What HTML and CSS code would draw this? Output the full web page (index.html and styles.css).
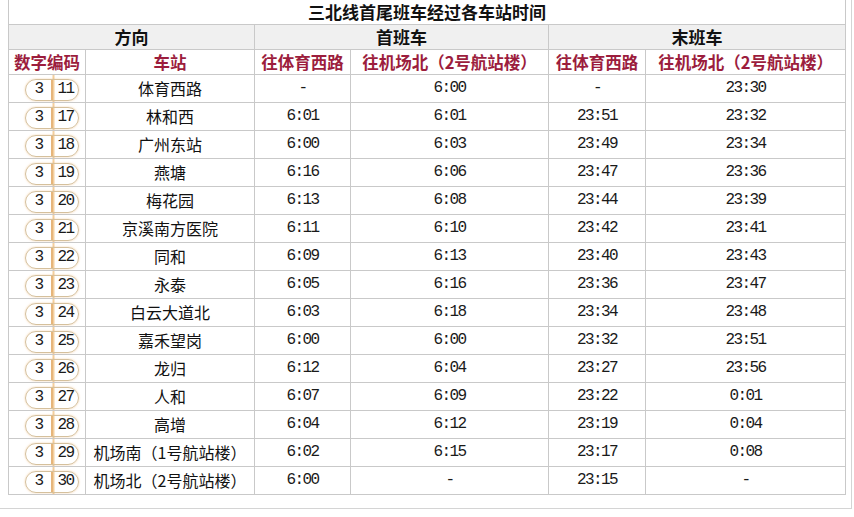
FILE: index.html
```html
<!DOCTYPE html>
<html lang="zh-CN">
<head>
<meta charset="utf-8">
<title>三北线首尾班车经过各车站时间</title>
<link rel="stylesheet" href="styles.css">
</head>
<body>
<div class="frame">
<table class="timetable">
  <colgroup>
    <col class="c-code"><col class="c-station"><col class="c-t1"><col class="c-t2"><col class="c-t3"><col class="c-t4">
  </colgroup>
  <thead>
    <tr class="title-row"><th colspan="6">三北线首尾班车经过各车站时间</th></tr>
    <tr class="group-row"><th colspan="2">方向</th><th colspan="2">首班车</th><th colspan="2">末班车</th></tr>
    <tr class="sub-row"><th>数字编码</th><th>车站</th><th>往体育西路</th><th>往机场北（2号航站楼）</th><th>往体育西路</th><th>往机场北（2号航站楼）</th></tr>
  </thead>
  <tbody>
    <tr><td class="code"><span class="pill"><span class="l">3</span><span class="n">11</span></span></td><td class="st">体育西路</td><td class="tm">-</td><td class="tm">6:00</td><td class="tm">-</td><td class="tm">23:30</td></tr>
    <tr><td class="code"><span class="pill"><span class="l">3</span><span class="n">17</span></span></td><td class="st">林和西</td><td class="tm">6:01</td><td class="tm">6:01</td><td class="tm">23:51</td><td class="tm">23:32</td></tr>
    <tr><td class="code"><span class="pill"><span class="l">3</span><span class="n">18</span></span></td><td class="st">广州东站</td><td class="tm">6:00</td><td class="tm">6:03</td><td class="tm">23:49</td><td class="tm">23:34</td></tr>
    <tr><td class="code"><span class="pill"><span class="l">3</span><span class="n">19</span></span></td><td class="st">燕塘</td><td class="tm">6:16</td><td class="tm">6:06</td><td class="tm">23:47</td><td class="tm">23:36</td></tr>
    <tr><td class="code"><span class="pill"><span class="l">3</span><span class="n">20</span></span></td><td class="st">梅花园</td><td class="tm">6:13</td><td class="tm">6:08</td><td class="tm">23:44</td><td class="tm">23:39</td></tr>
    <tr><td class="code"><span class="pill"><span class="l">3</span><span class="n">21</span></span></td><td class="st">京溪南方医院</td><td class="tm">6:11</td><td class="tm">6:10</td><td class="tm">23:42</td><td class="tm">23:41</td></tr>
    <tr><td class="code"><span class="pill"><span class="l">3</span><span class="n">22</span></span></td><td class="st">同和</td><td class="tm">6:09</td><td class="tm">6:13</td><td class="tm">23:40</td><td class="tm">23:43</td></tr>
    <tr><td class="code"><span class="pill"><span class="l">3</span><span class="n">23</span></span></td><td class="st">永泰</td><td class="tm">6:05</td><td class="tm">6:16</td><td class="tm">23:36</td><td class="tm">23:47</td></tr>
    <tr><td class="code"><span class="pill"><span class="l">3</span><span class="n">24</span></span></td><td class="st">白云大道北</td><td class="tm">6:03</td><td class="tm">6:18</td><td class="tm">23:34</td><td class="tm">23:48</td></tr>
    <tr><td class="code"><span class="pill"><span class="l">3</span><span class="n">25</span></span></td><td class="st">嘉禾望岗</td><td class="tm">6:00</td><td class="tm">6:00</td><td class="tm">23:32</td><td class="tm">23:51</td></tr>
    <tr><td class="code"><span class="pill"><span class="l">3</span><span class="n">26</span></span></td><td class="st">龙归</td><td class="tm">6:12</td><td class="tm">6:04</td><td class="tm">23:27</td><td class="tm">23:56</td></tr>
    <tr><td class="code"><span class="pill"><span class="l">3</span><span class="n">27</span></span></td><td class="st">人和</td><td class="tm">6:07</td><td class="tm">6:09</td><td class="tm">23:22</td><td class="tm">0:01</td></tr>
    <tr><td class="code"><span class="pill"><span class="l">3</span><span class="n">28</span></span></td><td class="st">高增</td><td class="tm">6:04</td><td class="tm">6:12</td><td class="tm">23:19</td><td class="tm">0:04</td></tr>
    <tr><td class="code"><span class="pill"><span class="l">3</span><span class="n">29</span></span></td><td class="st">机场南（1号航站楼）</td><td class="tm">6:02</td><td class="tm">6:15</td><td class="tm">23:17</td><td class="tm">0:08</td></tr>
    <tr><td class="code"><span class="pill"><span class="l">3</span><span class="n">30</span></span></td><td class="st">机场北（2号航站楼）</td><td class="tm">6:00</td><td class="tm">-</td><td class="tm">23:15</td><td class="tm">-</td></tr>
  </tbody>
</table>
</div>
</body>
</html>
```
FILE: styles.css
```css
html, body {
  margin: 0;
  padding: 0;
  background: #ffffff;
}
body {
  font-family: "Noto Sans CJK SC", "Noto Sans", sans-serif;
  color: #111;
}
.frame {
  width: 851px;
  height: 508px;
  border-right: 1px solid #d4d4d4;
  border-bottom: 1px solid #d4d4d4;
  overflow: hidden;
}
.timetable {
  margin-left: 8px;
  margin-top: -1px;
  width: 837px;
  table-layout: fixed;
  border-collapse: collapse;
}
.c-code { width: 77px; }
.c-station { width: 169px; }
.c-t1 { width: 96px; }
.c-t2 { width: 198px; }
.c-t3 { width: 97px; }
.c-t4 { width: 200px; }

.timetable th,
.timetable td {
  border: 1px solid #c9c9c9;
  padding: 0;
  text-align: center;
  white-space: nowrap;
  overflow: hidden;
}
.title-row th {
  height: 24px;
  font-size: 17px;
  font-weight: 700;
  line-height: 24px;
  color: #111;
  background: #fff;
}
.group-row th {
  height: 24px;
  font-size: 17px;
  font-weight: 700;
  line-height: 24px;
  background: #f0f0f0;
  color: #111;
}
.sub-row th {
  height: 24px;
  font-size: 16.5px;
  font-weight: 700;
  line-height: 24px;
  color: #9c1d3d;
  background: #fff;
}
.timetable tbody td {
  height: 27px;
  line-height: 27px;
}
.st {
  font-size: 16px;
  color: #111;
}
.tm {
  font-family: "Liberation Mono", "DejaVu Sans Mono", monospace;
  font-size: 16px;
  letter-spacing: -1.6px;
  color: #1a1a1a;
}
.code {
  text-align: left !important;
  padding-left: 16px !important;
  background: linear-gradient(to right, transparent 43px, #f3cf9e 43px, #f3cf9e 45px, transparent 45px);
}
.pill {
  display: inline-flex;
  vertical-align: middle;
  width: 54px;
  height: 22px;
  box-sizing: border-box;
  border: 1.5px solid #d5c09c;
  border-radius: 11px;
  box-shadow: 0 0 2px rgba(238, 170, 90, 0.55);
  font-family: "Liberation Mono", "DejaVu Sans Mono", monospace;
  font-size: 16px;
  letter-spacing: -1.6px;
  line-height: 19px;
  color: #1a1a1a;
  margin-top: -2px;
}
.pill .l {
  width: 27px;
  text-align: center;
  box-sizing: border-box;
  border-right: 2px solid #e6b57a;
}
.pill .n {
  flex: 1;
  text-align: center;
}
```
